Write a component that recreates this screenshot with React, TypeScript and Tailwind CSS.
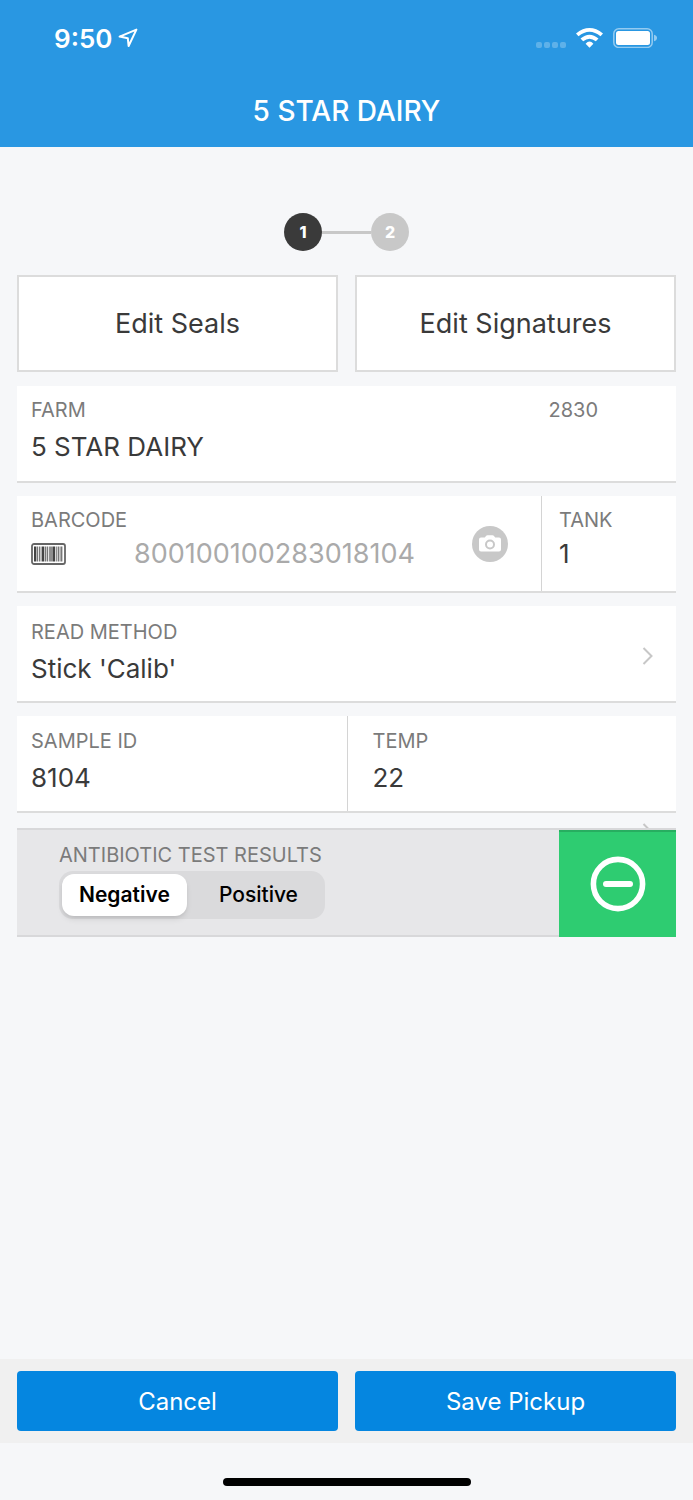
import { useState } from "react";
import type { ReactNode } from "react";

const cardBase = "flex h-[97px] border-b-2 border-[#dcdcdc] bg-white";
const labelText = "text-[20px] leading-6 text-[#7b7b7b]";
const valueText = "text-[26px] leading-8 text-[#3a3a3a]";
const inputBase = "block w-full min-w-0 bg-transparent p-0 outline-none";

function LocationArrow() {
  return (
    <svg className="h-5 w-5" viewBox="0 0 20 20" fill="none" stroke="white" strokeWidth="2" strokeLinejoin="round" aria-hidden="true">
      <path d="M18.4 1.6 L1.6 8.6 L9.8 10.2 L10.6 18 Z" />
    </svg>
  );
}

function Wifi() {
  return (
    <svg className="h-5 w-[27px]" viewBox="0 0 27 20" fill="white" aria-hidden="true">
      <path d="M13.5 19.7 L9.6 15.8 Q13.5 11.4 17.4 15.8 Z" />
      <path d="M4.5 10.5 Q13.5 2.9 22.5 10.5 L19.8 13.3 Q13.5 8.3 7.2 13.3 Z" />
      <path d="M0 5.5 Q13.5 -5.4 27 5.5 L24.5 8.2 Q13.5 -0.9 2.5 8.2 Z" />
    </svg>
  );
}

function Battery() {
  return (
    <svg className="h-5 w-11" viewBox="0 0 44 20" aria-hidden="true">
      <rect x="0.8" y="0.8" width="38.4" height="18.6" rx="5" fill="none" stroke="white" strokeOpacity="0.5" strokeWidth="1.5" />
      <rect x="3" y="3" width="34" height="14" rx="2.5" fill="white" />
      <path d="M41 6.8 Q44 7.6 44 10 Q44 12.4 41 13.2 Z" fill="white" fillOpacity="0.5" />
    </svg>
  );
}

function BarcodeIcon() {
  const bars: [number, number, string][] = [
    [3, 2.4, "#444"], [6, 1, "#777"], [7.8, 1.6, "#777"], [10.6, 2.6, "#444"],
    [13.8, 1.2, "#777"], [15.6, 1.4, "#777"], [17.8, 1, "#777"], [19.4, 1.2, "#444"],
    [21.4, 2.8, "#444"], [25.2, 1, "#777"], [26.8, 1.6, "#777"], [29.4, 2, "#777"],
  ];
  return (
    <svg className="h-[22px] w-[35px] shrink-0" viewBox="0 0 35 22" aria-hidden="true">
      <rect x="1" y="1" width="33" height="20" rx="2" fill="none" stroke="#666" strokeWidth="1.8" />
      {bars.map(([x, w, fill]) => (
        <rect key={x} x={x} y="3.5" width={w} height="15" fill={fill} />
      ))}
    </svg>
  );
}

function CameraIcon() {
  return (
    <svg className="h-9 w-9" viewBox="0 0 36 36" aria-hidden="true">
      <circle cx="18" cy="18" r="18" fill="#c8c8c8" />
      <path d="M9 11.5 H12.8 L14.2 9.8 Q14.6 9.2 15.4 9.2 H20.6 Q21.4 9.2 21.8 9.8 L23.2 11.5 H27 Q29 11.5 29 13.5 V23.6 Q29 25.6 27 25.6 H9 Q7 25.6 7 23.6 V13.5 Q7 11.5 9 11.5 Z" fill="white" />
      <circle cx="18" cy="18.5" r="4" fill="white" stroke="#c8c8c8" strokeWidth="2" />
    </svg>
  );
}

function Chevron() {
  return (
    <svg className="h-[18px] w-3 shrink-0" viewBox="0 0 12 18" fill="none" stroke="#c7c7c7" strokeWidth="2" aria-hidden="true">
      <path d="M1.5 1 L9.5 9 L1.5 17" />
    </svg>
  );
}

function TextField(props: { id: string; label: string; value: string; className: string }) {
  return (
    <div className={props.className}>
      <label htmlFor={props.id} className={`block ${labelText}`}>{props.label}</label>
      <input id={props.id} defaultValue={props.value} className={`mt-[9px] ${inputBase} ${valueText}`} />
    </div>
  );
}

function EditButton({ children }: { children: ReactNode }) {
  return (
    <button type="button" className="h-[97px] flex-1 border-2 border-[#dcdcdc] bg-white pt-0.5 text-[27px] text-[#3a3a3a]">
      {children}
    </button>
  );
}

function ActionButton({ children }: { children: ReactNode }) {
  return (
    <button type="button" className="h-[60px] flex-1 rounded bg-[#0586e0] pt-0.5 text-[24px] text-white">
      {children}
    </button>
  );
}

export default function App() {
  const [result, setResult] = useState("Negative");

  return (
    <div className="flex min-h-screen flex-col bg-[#f6f7f9] font-['Inter',sans-serif]">
      <header className="bg-[#2997e2] text-white">
        <div className="flex h-[76px] items-center pr-9 pl-[54px]">
          <span className="text-[26px] font-semibold">9:50</span>
          <span className="ml-1.5"><LocationArrow /></span>
          <div className="ml-auto flex items-center">
            <div className="mr-2.5 flex gap-0.5 self-end">
              {[0, 1, 2, 3].map((dot) => (
                <span key={dot} className="size-1.5 rounded-xs bg-white/25" />
              ))}
            </div>
            <Wifi />
            <span className="ml-2.5"><Battery /></span>
          </div>
        </div>
        <h1 className="flex h-[71px] items-center justify-center pb-0.5 text-[28px] font-medium">5 STAR DAIRY</h1>
      </header>

      <main className="flex-1 px-[17px] pt-[66px]">
        <ol className="flex items-center justify-center text-[16px] font-extrabold text-white">
          <li className="flex size-[38px] items-center justify-center rounded-full bg-[#3a3a3a]">1</li>
          <li aria-hidden="true" className="h-[3px] w-[49px] bg-[#c8c8c8]" />
          <li className="flex size-[38px] items-center justify-center rounded-full bg-[#c8c8c8]">2</li>
        </ol>

        <div className="mt-6 flex gap-[17px]">
          <EditButton>Edit Seals</EditButton>
          <EditButton>Edit Signatures</EditButton>
        </div>

        <div className="mt-3.5 flex flex-col gap-[13px]">
          <section className={cardBase}>
            <TextField id="farm" label="FARM" value="5 STAR DAIRY" className="flex-1 pt-3 pl-3.5" />
            <span className={`pt-3 pr-[78px] ${labelText}`}>2830</span>
          </section>

          <section className={cardBase}>
            <div className="flex min-w-0 flex-1 items-center pr-[33px] pl-3.5">
              <div className="min-w-0 flex-1 self-start pt-3">
                <label htmlFor="barcode" className={`block ${labelText}`}>BARCODE</label>
                <div className="mt-1.5 flex items-center gap-[68px]">
                  <BarcodeIcon />
                  <input id="barcode" readOnly defaultValue="800100100283018104" className={`${inputBase} text-[27px] leading-8 text-[#aaaaaa]`} />
                </div>
              </div>
              <button type="button" aria-label="Scan barcode"><CameraIcon /></button>
            </div>
            <div className="w-[135px] border-l border-[#d4d4d4] pt-3 pl-[17px]">
              <label htmlFor="tank" className={`block ${labelText}`}>TANK</label>
              <input id="tank" defaultValue="1" className={`mt-1.5 ${inputBase} ${valueText}`} />
            </div>
          </section>

          <button type="button" className={`${cardBase} items-center pr-[22px] pl-3.5 text-left`}>
            <span className="flex-1 self-start pt-3.5">
              <span className={`block ${labelText}`}>READ METHOD</span>
              <span className={`mt-[9px] block ${valueText}`}>Stick 'Calib'</span>
            </span>
            <span className="pt-1"><Chevron /></span>
          </button>

          <section className={cardBase}>
            <TextField id="sample" label="SAMPLE ID" value="8104" className="w-1/2 pt-[13px] pl-3.5" />
            <TextField id="temp" label="TEMP" value="22" className="w-1/2 border-l border-[#d4d4d4] pt-[13px] pl-[25px]" />
          </section>
        </div>

        <div className="flex h-[15px] justify-end overflow-hidden pt-2.5 pr-[22px]">
          <Chevron />
        </div>

        <section className="flex h-[109px] border-y-2 border-[#d8d8da] bg-[#e7e7e9]">
          <fieldset className="flex-1 pl-[42px]">
            <legend className={`pt-[13px] ${labelText}`}>ANTIBIOTIC TEST RESULTS</legend>
            <div className="mt-1 flex h-12 w-[266px] gap-2 rounded-[14px] bg-[#dadadc] p-[3px]">
              {["Negative", "Positive"].map((option) => (
                <label
                  key={option}
                  className="flex flex-1 cursor-pointer items-center justify-center rounded-xl text-[21px] font-medium text-black has-checked:flex-none has-checked:bg-white has-checked:px-[17px] has-checked:font-semibold has-checked:shadow-md"
                >
                  <input
                    type="radio"
                    name="result"
                    className="sr-only"
                    checked={result === option}
                    onChange={() => setResult(option)}
                  />
                  {option}
                </label>
              ))}
            </div>
          </fieldset>
          <button type="button" aria-label="Remove test result" className="-mb-0.5 flex w-[117px] items-center justify-center border-t-2 border-[#27ae60] bg-[#2ecc71] pb-0.5">
            <svg className="size-14" viewBox="0 0 56 56" fill="none" stroke="white" strokeLinecap="round" aria-hidden="true">
              <circle cx="28" cy="28" r="24.6" strokeWidth="5.6" />
              <path d="M16 28 H40" strokeWidth="6" />
            </svg>
          </button>
        </section>
      </main>

      <footer>
        <div className="flex gap-[17px] bg-[#f0f0f0] px-[17px] py-3">
          <ActionButton>Cancel</ActionButton>
          <ActionButton>Save Pickup</ActionButton>
        </div>
        <div className="flex h-[57px] items-end justify-center pb-3.5">
          <span className="h-2 w-[248px] rounded-full bg-black" />
        </div>
      </footer>
    </div>
  );
}
